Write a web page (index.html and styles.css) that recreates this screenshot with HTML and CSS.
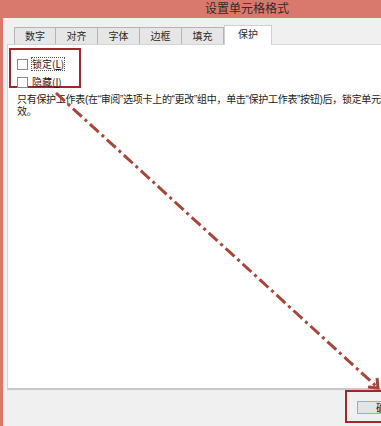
FILE: index.html
```html
<!DOCTYPE html>
<html lang="zh-CN">
<head>
  <meta charset="UTF-8">
  <title>设置单元格格式</title>
  <link rel="stylesheet" href="styles.css">
</head>
<body>
  <div class="window">
    <div class="titlebar">设置单元格格式</div>
    <div class="client">
      <div class="tabs">
        <div class="tab">数字</div>
        <div class="tab">对齐</div>
        <div class="tab">字体</div>
        <div class="tab">边框</div>
        <div class="tab">填充</div>
        <div class="tab active">保护</div>
      </div>
      <div class="panel">
        <div class="mark-group">
          <label class="check"><span class="box"></span><span class="focus">锁定(<u>L</u>)</span></label>
          <label class="check"><span class="box"></span><span>隐藏(<u>I</u>)</span></label>
        </div>
        <p class="note">只有保护工作表(在“审阅”选项卡上的“更改”组中，单击“保护工作表”按钮)后，锁定单元格或隐藏公式才有<br>效。</p>
      </div>
      <div class="footer">
        <div class="mark-btn">
          <button class="btn">确定</button>
        </div>
      </div>
    </div>
  </div>

  <!-- 标注箭头 -->
  <svg class="arrow" width="381" height="426" viewBox="0 0 381 426">
    <line x1="56" y1="93" x2="377" y2="387" stroke="#a5473b" stroke-width="3" stroke-dasharray="12 4 3 4"/>
    <polyline points="368,387 378,388 377,378" fill="none" stroke="#a5473b" stroke-width="3"/>
  </svg>
</body>
</html>
```

FILE: styles.css
```css
body {
  margin: 0;
  width: 381px;
  height: 426px;
  overflow: hidden;
  font-family: "Noto Sans CJK SC", "Liberation Sans", sans-serif;
  font-size: 10px;
  color: #1a1a1a;
  position: relative;
}
.window {
  display: flex;
  flex-direction: column;
  height: 426px;
  background-color: #d9786c;
  padding-left: 3px;
  box-sizing: border-box;
}
.titlebar {
  height: 18px;
  line-height: 16px;
  padding-left: 202px;
  font-size: 12px;
  color: #3a2a28;
  white-space: nowrap;
}
.client {
  flex: 1;
  display: flex;
  flex-direction: column;
  background-color: #f0f0f0;
  border-left: 1px solid #f6dcd8;
  padding-top: 7px;
  padding-left: 3px;
  min-width: 0;
}
.tabs {
  display: flex;
  align-items: flex-end;
  padding-left: 7px;
  height: 19px;
  position: relative;
  z-index: 1;
}
.tab {
  width: 42px;
  height: 17px;
  line-height: 16px;
  text-align: center;
  background-color: #e6e6e6;
  border: 1px solid #b4b4b4;
  border-bottom: none;
  border-left: none;
  box-sizing: border-box;
  color: #2a2a2a;
}
.tab:first-child {
  border-left: 1px solid #b4b4b4;
}
.tab.active {
  width: 48px;
  height: 20px;
  line-height: 16px;
  background-color: #ffffff;
  border-left: 1px solid #d0d0d0;
  border-color: #d0d0d0;
  margin-bottom: -1px;
}
.panel {
  height: 346px;
  background-color: #ffffff;
  border: 1px solid #d6d6d6;
  border-right: none;
  border-bottom: 2px solid #c8c8c8;
  box-sizing: border-box;
  padding: 3px 0 0 1px;
  overflow: hidden;
}
.mark-group {
  width: 72px;
  height: 40px;
  border: 2px solid #a3262a;
  box-sizing: border-box;
  display: flex;
  flex-direction: column;
  gap: 6px;
  padding: 8px 0 0 6px;
}
.check {
  display: flex;
  align-items: center;
  gap: 4px;
  height: 12px;
  line-height: 12px;
  white-space: nowrap;
}
.box {
  width: 9px;
  height: 9px;
  border: 1px solid #8a8a8a;
  background-color: #ffffff;
}
.focus {
  outline: 1px dotted #555555;
}
u {
  text-decoration: underline;
}
.note {
  margin: 6px 0 0 8px;
  font-family: "Liberation Sans", "Noto Sans CJK SC", sans-serif;
  white-space: nowrap;
  line-height: 12px;
  letter-spacing: -0.3px;
}
.footer {
  flex: 1;
  display: flex;
  justify-content: flex-end;
}
.mark-btn {
  width: 36px;
  height: 33px;
  border: 2px solid #a3262a;
  border-right: none;
  box-sizing: border-box;
  padding: 8px 0 0 10px;
  overflow: hidden;
}
.btn {
  width: 60px;
  height: 13px;
  padding: 0 0 0 18px;
  border: 1px solid #8fb0cf;
  background-color: #e4e4e4;
  font-family: inherit;
  font-size: 10px;
  line-height: 11px;
  text-align: left;
  color: #1a1a1a;
}
.arrow {
  position: absolute;
  left: 0;
  top: 0;
  pointer-events: none;
}
```
